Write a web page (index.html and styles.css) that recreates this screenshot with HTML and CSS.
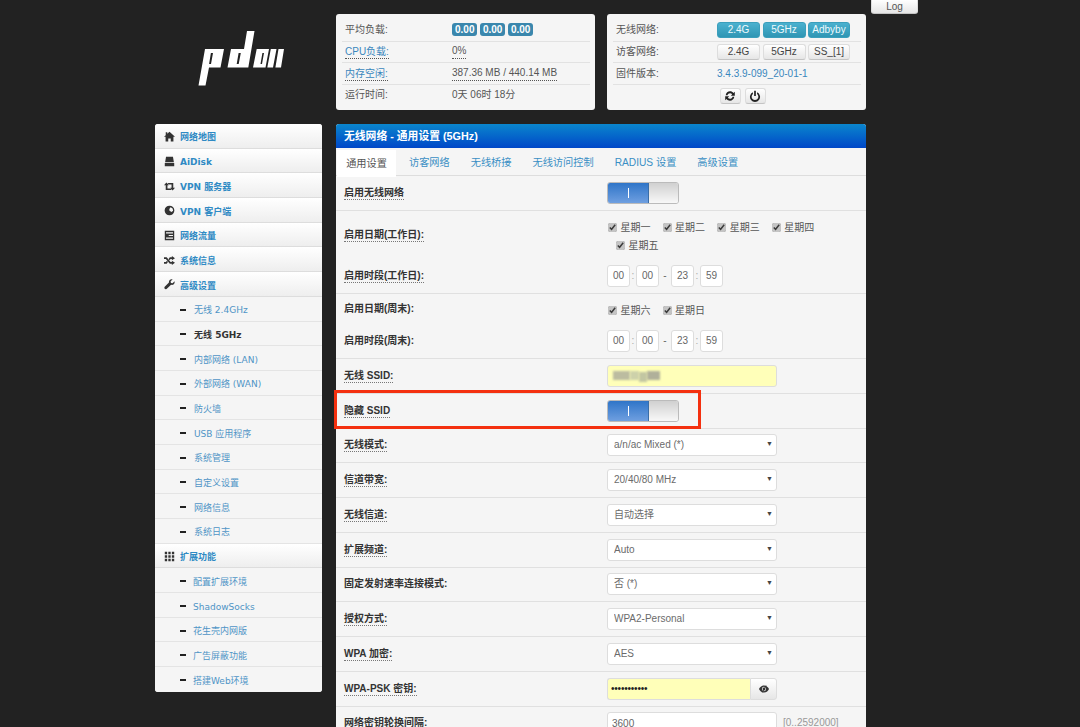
FILE: index.html
```html
<!DOCTYPE html>
<html lang="zh">
<head>
<meta charset="utf-8">
<title>无线网络 - 通用设置 (5GHz)</title>
<link rel="stylesheet" href="styles.css">
</head>
<body>
<svg class="defs" width="0" height="0" aria-hidden="true">
  <symbol id="i-home" viewBox="0 0 14 14"><path d="M7 .8 L14 7.4 H12 V13.5 H8.6 V9.5 H5.4 V13.5 H2 V7.4 H0 L2.2 5.3 V1.6 H4.2 V3.4 Z"/></symbol>
  <symbol id="i-hdd" viewBox="0 0 14 14"><path d="M2.6 1 H11.4 L12.6 8 H1.4 Z M1 9 H13 V13 H1 Z"/></symbol>
  <symbol id="i-retweet" viewBox="0 0 14 14"><path d="M3 2 L6.2 5.4 H4.4 V9.4 H8.2 L9.8 11.4 H2.2 V5.4 H0 Z M4.4 2.6 H11.8 V8.6 H14 L11 12 L7.8 8.6 H9.6 V4.6 H6 Z"/></symbol>
  <symbol id="i-globe" viewBox="0 0 14 14"><path fill-rule="evenodd" d="M7 .8 A6.2 6.2 0 1 0 7 13.2 A6.2 6.2 0 1 0 7 .8 Z M8.4 3 L11 4.4 L11.6 7.2 L9.6 8.8 L8 8 L6.6 6.6 L7 4.8 Z"/></symbol>
  <symbol id="i-tasks" viewBox="0 0 14 14"><path fill-rule="evenodd" d="M1 1 H13 V13 H1 Z M2.6 3 V4.4 H11.4 V3 Z M6 6.3 V7.7 H11.4 V6.3 Z M2.6 9.6 V11 H11.4 V9.6 Z"/></symbol>
  <symbol id="i-random" viewBox="0 0 14 14"><path d="M0 3 H3.4 L8.4 9 H10 V7.2 L14 10 L10 12.8 V11 H7.4 L2.4 5 H0 Z M0 9 H2.4 L3.8 7.4 L5 8.9 L3.4 11 H0 Z M7.4 3 H10 V1.2 L14 4 L10 6.8 V5 H8.4 L7 6.6 L5.9 5.1 Z"/></symbol>
  <symbol id="i-wrench" viewBox="0 0 14 14"><path d="M13.4 3 L10.9 5.4 L8.8 5 L8.4 3 L10.9 .6 C8.4 -.2 5.8 1.8 6.3 4.6 L.9 10 C-.2 11.4 .9 13.4 2.6 13 C3 12.9 3.3 12.7 3.6 12.4 L9 7.4 C11.8 8.2 14.2 5.8 13.4 3 Z"/></symbol>
  <symbol id="i-th" viewBox="0 0 14 14"><path d="M1 1 H4 V4 H1 Z M5.5 1 H8.5 V4 H5.5 Z M10 1 H13 V4 H10 Z M1 5.5 H4 V8.5 H1 Z M5.5 5.5 H8.5 V8.5 H5.5 Z M10 5.5 H13 V8.5 H10 Z M1 10 H4 V13 H1 Z M5.5 10 H8.5 V13 H5.5 Z M10 10 H13 V13 H10 Z"/></symbol>
  <symbol id="i-minus" viewBox="0 0 6 2"><rect width="6" height="2"/></symbol>
</svg>

<div class="page">
  <header class="top">
    <div class="logo">
      <svg class="logo-mark" viewBox="0 0 100 65" role="img" aria-label="pdcn">
        <path fill-rule="evenodd" d="M15 24 H34 L30.5 42.5 H19 L15.5 60.5 H8.5 Z M20.9 28 L19.1 39 H21 L23 28 Z"/>
        <path fill-rule="evenodd" d="M57 6 H64.5 L58.3 42.5 H37.5 L41 24 H54 Z M48.6 28 L46.7 39 H48.7 L50.8 28 Z"/>
        <path fill-rule="evenodd" d="M66.7 24 H79 L75.5 42.5 H63 Z M72.4 28 L70.5 39 H72 L74 28 Z"/>
        <path d="M80.8 24 H86.5 L83 42.5 H77.3 Z M88.5 24 H94 L91 42.5 H85.4 Z"/>
      </svg>
    </div>
    <section class="panel">
      <div class="stat"><span class="stat-name">平均负载:</span><span class="stat-value"><span class="badge">0.00</span><span class="badge">0.00</span><span class="badge">0.00</span></span></div>
      <div class="stat"><span class="stat-name"><a class="tip-link">CPU负载:</a></span><span class="stat-value"><span class="tip">0%</span></span></div>
      <div class="stat"><span class="stat-name"><a class="tip-link">内存空闲:</a></span><span class="stat-value"><span class="tip">387.36 MB / 440.14 MB</span></span></div>
      <div class="stat"><span class="stat-name">运行时间:</span><span class="stat-value">0天 06时 18分</span></div>
    </section>
    <section class="panel panel-status">
      <div class="stat"><span class="stat-name">无线网络:</span><span class="stat-value"><button class="btn btn-info w43">2.4G</button><button class="btn btn-info w43">5GHz</button><button class="btn btn-info w42">Adbyby</button></span></div>
      <div class="stat"><span class="stat-name">访客网络:</span><span class="stat-value"><button class="btn w43">2.4G</button><button class="btn w43">5GHz</button><button class="btn w42">SS_[1]</button></span></div>
      <div class="stat"><span class="stat-name">固件版本:</span><span class="stat-value"><a class="fw-link">3.4.3.9-099_20-01-1</a></span></div>
      <div class="stat stat-tools">
        <button class="btn btn-icon" aria-label="刷新"><svg viewBox="0 0 14 14" class="tool-icon"><path d="M2 6.2 C2.4 3.4 4.5 1.6 7 1.6 C8.7 1.6 10.1 2.3 11 3.4 L12.6 2 V6.6 H8 L9.5 5 C8.9 4.2 8 3.7 7 3.7 C5.6 3.7 4.4 4.7 4.1 6.2 Z M12 7.8 C11.6 10.6 9.5 12.4 7 12.4 C5.3 12.4 3.9 11.7 3 10.6 L1.4 12 V7.4 H6 L4.5 9 C5.1 9.8 6 10.3 7 10.3 C8.4 10.3 9.6 9.3 9.9 7.8 Z"/></svg></button>
        <button class="btn btn-icon" aria-label="电源"><svg viewBox="0 0 14 14" class="tool-icon"><path d="M6 1 H8 V7 H6 Z M4.6 2.6 V4.8 A3.9 3.9 0 1 0 9.4 4.8 V2.6 A5.9 5.9 0 1 1 4.6 2.6 Z"/></svg></button>
      </div>
    </section>
    <button class="btn btn-log">Log</button>
  </header>

  <div class="layout">
    <nav class="sidebar">
      <a class="nav-main"><svg class="nav-icon"><use href="#i-home"/></svg>网络地图</a>
      <a class="nav-main"><svg class="nav-icon"><use href="#i-hdd"/></svg>AiDisk</a>
      <a class="nav-main"><svg class="nav-icon"><use href="#i-retweet"/></svg>VPN 服务器</a>
      <a class="nav-main"><svg class="nav-icon"><use href="#i-globe"/></svg>VPN 客户端</a>
      <a class="nav-main"><svg class="nav-icon"><use href="#i-tasks"/></svg>网络流量</a>
      <a class="nav-main"><svg class="nav-icon"><use href="#i-random"/></svg>系统信息</a>
      <a class="nav-main"><svg class="nav-icon"><use href="#i-wrench"/></svg>高级设置</a>
      <a class="nav-sub"><svg class="nav-dash"><use href="#i-minus"/></svg>无线 2.4GHz</a>
      <a class="nav-sub is-active"><svg class="nav-dash"><use href="#i-minus"/></svg>无线 5GHz</a>
      <a class="nav-sub"><svg class="nav-dash"><use href="#i-minus"/></svg>内部网络 (LAN)</a>
      <a class="nav-sub"><svg class="nav-dash"><use href="#i-minus"/></svg>外部网络 (WAN)</a>
      <a class="nav-sub"><svg class="nav-dash"><use href="#i-minus"/></svg>防火墙</a>
      <a class="nav-sub"><svg class="nav-dash"><use href="#i-minus"/></svg>USB 应用程序</a>
      <a class="nav-sub"><svg class="nav-dash"><use href="#i-minus"/></svg>系统管理</a>
      <a class="nav-sub"><svg class="nav-dash"><use href="#i-minus"/></svg>自定义设置</a>
      <a class="nav-sub"><svg class="nav-dash"><use href="#i-minus"/></svg>网络信息</a>
      <a class="nav-sub"><svg class="nav-dash"><use href="#i-minus"/></svg>系统日志</a>
      <a class="nav-main"><svg class="nav-icon"><use href="#i-th"/></svg>扩展功能</a>
      <a class="nav-sub nav-ext"><svg class="nav-dash"><use href="#i-minus"/></svg>配置扩展环境</a>
      <a class="nav-sub nav-ext"><svg class="nav-dash"><use href="#i-minus"/></svg>ShadowSocks</a>
      <a class="nav-sub nav-ext"><svg class="nav-dash"><use href="#i-minus"/></svg>花生壳内网版</a>
      <a class="nav-sub nav-ext"><svg class="nav-dash"><use href="#i-minus"/></svg>广告屏蔽功能</a>
      <a class="nav-sub nav-ext"><svg class="nav-dash"><use href="#i-minus"/></svg>搭建Web环境</a>
    </nav>

    <main class="content">
      <h1 class="content-title">无线网络 - 通用设置 (5GHz)</h1>
      <div class="tabs">
        <a class="tab is-active">通用设置</a>
        <a class="tab">访客网络</a>
        <a class="tab">无线桥接</a>
        <a class="tab">无线访问控制</a>
        <a class="tab">RADIUS 设置</a>
        <a class="tab">高级设置</a>
      </div>

      <div class="row"><span class="label"><span class="tip-label">启用无线网络</span></span><div class="toggle"><span class="toggle-on"><i class="toggle-bar"></i></span><span class="toggle-off"></span></div></div>

      <div class="row row-group">
        <div class="sub sub-days"><span class="label label-mid"><span class="tip-label">启用日期(工作日):</span></span>
          <div class="days">
            <div class="days-line">
              <label class="day"><input type="checkbox" checked>星期一</label>
              <label class="day"><input type="checkbox" checked>星期二</label>
              <label class="day"><input type="checkbox" checked>星期三</label>
              <label class="day"><input type="checkbox" checked>星期四</label>
            </div>
            <div class="days-line days-wrap">
              <label class="day"><input type="checkbox" checked>星期五</label>
            </div>
          </div>
        </div>
        <div class="sub sub-time"><span class="label"><span class="tip-label">启用时段(工作日):</span></span>
          <div class="times"><input class="time" value="00"><span class="sep">:</span><input class="time" value="00"><span class="sep sep-dash">-</span><input class="time" value="23"><span class="sep">:</span><input class="time" value="59"></div>
        </div>
      </div>

      <div class="row row-group">
        <div class="sub sub-weekend"><span class="label">启用日期(周末):</span>
          <div class="days-line">
            <label class="day"><input type="checkbox" checked>星期六</label>
            <label class="day"><input type="checkbox" checked>星期日</label>
          </div>
        </div>
        <div class="sub sub-weekend-time"><span class="label">启用时段(周末):</span>
          <div class="times"><input class="time" value="00"><span class="sep">:</span><input class="time" value="00"><span class="sep sep-dash">-</span><input class="time" value="23"><span class="sep">:</span><input class="time" value="59"></div>
        </div>
      </div>

      <div class="row"><span class="label"><span class="tip-label">无线 SSID:</span></span><div class="field field-ssid"><span class="mask"></span><span class="mask mask-light"></span><span class="mask mask-low"></span><span class="mask mask-end"></span></div></div>
      <div class="row"><span class="label"><span class="tip-label">隐藏 SSID</span></span><div class="toggle"><span class="toggle-on"><i class="toggle-bar"></i></span><span class="toggle-off"></span></div></div>
      <div class="row"><span class="label"><span class="tip-label">无线模式:</span></span><div class="select-wrap"><select class="select"><option>a/n/ac Mixed (*)</option></select></div></div>
      <div class="row"><span class="label"><span class="tip-label">信道带宽:</span></span><div class="select-wrap"><select class="select"><option>20/40/80 MHz</option></select></div></div>
      <div class="row"><span class="label"><span class="tip-label">无线信道:</span></span><div class="select-wrap"><select class="select"><option>自动选择</option></select></div></div>
      <div class="row"><span class="label"><span class="tip-label">扩展频道:</span></span><div class="select-wrap"><select class="select"><option>Auto</option></select></div></div>
      <div class="row"><span class="label">固定发射速率连接模式:</span><div class="select-wrap"><select class="select"><option>否 (*)</option></select></div></div>
      <div class="row"><span class="label"><span class="tip-label">授权方式:</span></span><div class="select-wrap"><select class="select"><option>WPA2-Personal</option></select></div></div>
      <div class="row"><span class="label"><span class="tip-label">WPA 加密:</span></span><div class="select-wrap"><select class="select"><option>AES</option></select></div></div>
      <div class="row"><span class="label"><span class="tip-label">WPA-PSK 密钥:</span></span>
        <div class="pass"><input class="pass-input" type="password" value="12345678901"><button class="pass-eye" aria-label="显示"><svg viewBox="0 0 14 10" class="eye-icon"><path fill-rule="evenodd" d="M7 0 C10.4 0 13 2.6 14 5 C13 7.4 10.4 10 7 10 C3.6 10 1 7.4 0 5 C1 2.6 3.6 0 7 0 Z M7 2 A3 3 0 1 0 7 8 A3 3 0 1 0 7 2 Z"/><circle cx="7" cy="5" r="2"/><path d="M9.6 0 L10.8 .6 L5 10 L3.8 9.4 Z"/></svg></button></div>
      </div>
      <div class="row"><span class="label"><span class="tip-label">网络密钥轮换间隔:</span></span><input class="field-plain" value="3600"><span class="hint">[0..2592000]</span></div>
      <div class="row"></div>

      <div class="callout"></div>
    </main>
  </div>
</div>
</body>
</html>
```
FILE: styles.css
```css
* { box-sizing: border-box; }
html, body { margin: 0; height: 727px; overflow: hidden; background: #222; }
body { font: 10px/1.2 "Liberation Sans", "Noto Sans CJK SC", sans-serif; color: #444; }
.defs { display: block; height: 0; }
a { color: #2f8ac4; text-decoration: none; }
button, input, select { font: inherit; margin: 0; }

.page { width: 1080px; padding-left: 155px; }

/* top */
.top { display: flex; align-items: flex-start; height: 124px; }
.logo { width: 181px; height: 124px; padding: 25px 0 0 35px; }
.logo-mark { display: block; width: 100px; height: 65px; fill: #fff; }
.panel { width: 259px; height: 96px; margin-top: 14px; padding: 5px 5px 0 6px; background: #f5f5f5; border-radius: 3px; }
.panel-status { margin-left: 12px; }
.stat { display: flex; align-items: center; height: 21.7px; padding-left: 3px; border-top: 1px solid #e2e2e2; }
.stat:first-child { border-top: 0; }
.stat-name { width: 107px; color: #555; flex: none; }
.panel-status .stat-name { width: 101px; }
.stat-value { display: flex; gap: 2.5px; color: #555; }
.stat a { color: #3a87bd; }
.tip, .tip-link { border-bottom: 1px dotted #555; padding-bottom: 1px; }
.tip-link { color: #3a87bd; }
.badge { padding: 1.5px 3px; height: 13px; line-height: 10px; font-weight: 700; color: #fff; background: #3a87ad; border-radius: 3px; }
.btn { height: 16px; padding: 0; font-size: 10px; line-height: 14px; color: #444; background: linear-gradient(#fff, #e6e6e6); border: 1px solid #ddd; border-bottom-color: #c4c4c4; border-radius: 3px; }
.btn-info { color: #eef9fc; background: linear-gradient(#4bb1cf, #2f96b4); border-color: #3b9fbc; }
.w43 { width: 43px; }
.w42 { width: 42px; }
.stat-tools { justify-content: center; gap: 4px; padding: 2px 0 0 11px; }
.btn-icon { width: 21px; display: flex; align-items: center; justify-content: center; }
.tool-icon { width: 12px; height: 12px; fill: #222; }
.btn-log { width: 47px; height: 14px; margin-left: 5px; border-top: 0; border-radius: 0 0 3px 3px; color: #555; line-height: 13px; }

/* layout */
.layout { display: flex; gap: 14px; align-items: flex-start; }

/* sidebar */
.sidebar { width: 167px; display: grid; grid-auto-rows: 24.7px; background: #f5f5f5; border-radius: 3px; overflow: hidden; }
.nav-main { display: flex; align-items: center; padding: 4px 0 0 9px; font-family: "DejaVu Sans", "Noto Sans CJK SC", sans-serif; font-size: 9px; font-weight: 700; color: #2f8ac4; background: linear-gradient(#fff, #eee); border-bottom: 1px solid #ddd; }
.nav-icon { width: 11px; height: 11px; margin: -2px 5px 0 0; fill: #333; flex: none; }
.nav-sub { display: flex; align-items: center; padding: 4px 0 0 25px; font-family: "DejaVu Sans", "Noto Sans CJK SC", sans-serif; font-size: 9px; color: #4f94c6; background: #f5f5f5; border-bottom: 1px solid #e4e4e4; }
.nav-sub:last-child { border-bottom: 0; }
.nav-dash { width: 6px; height: 2px; margin: -2px 8px 0 0; fill: #222; flex: none; }
.nav-ext .nav-dash { margin-right: 7px; }
.is-active.nav-sub { font-weight: 700; color: #333; }

/* content */
.content { position: relative; width: 530px; background: #f5f5f5; border-radius: 3px 3px 0 0; }
.content-title { margin: 0; height: 24px; padding: 0 0 0 8px; font-size: 10.8px; line-height: 24px; font-weight: 700; color: #fff; background: linear-gradient(#0a86cd, #0047c8); border-radius: 3px 3px 0 0; }
.tabs { display: flex; height: 28px; padding: 2px 0 0 1px; font-size: 10.2px; border-bottom: 1px solid #ddd; }
.tab { display: flex; align-items: center; padding: 2px 0 0; margin-right: 21px; color: #3a8fc4; }
.tab.is-active { width: 59px; height: 27px; margin-right: 13px; justify-content: center; color: #555; background: #fff; }

.row { display: flex; align-items: center; height: 34.75px; padding-left: 8px; border-bottom: 1px solid #e0e0e0; }
.row-group { display: block; height: auto; padding: 0; }
.label { width: 263px; flex: none; font-size: 10px; font-weight: 700; color: #333; }
.tip-label { border-bottom: 1px dotted #777; padding-bottom: 1px; }
.sub { display: flex; align-items: center; padding-left: 8px; }
.sub-days { height: 49px; }
.sub-days > .label { margin-bottom: 1px; }
.sub-time { height: 33px; padding-bottom: 1px; }
.sub-weekend { height: 31px; padding-top: 3px; }
.sub-weekend > .label { margin-bottom: 3px; }
.sub-weekend-time { height: 33.25px; padding-bottom: 1px; }
.days { display: flex; flex-direction: column; gap: 6px; padding-top: 3px; }
.days-line { display: flex; }
.days-wrap { padding-left: 8px; }
.day { display: flex; align-items: center; width: 54.6px; color: #555; }
.day input { width: 9px; height: 9px; margin: 0 3.5px 0 1px; accent-color: #c4c4c4; }

.times { display: flex; align-items: center; }
.time { width: 23px; height: 22px; padding: 0; text-align: center; color: #666; background: #fff; border: 1px solid #ddd; border-radius: 3px; }
.sep { width: 6px; text-align: center; color: #aaa; }
.sep-dash { width: 12px; color: #666; }

.toggle { display: flex; width: 72px; height: 22px; border-radius: 3px; overflow: hidden; border: 1px solid #bbb; }
.toggle-on { display: flex; align-items: center; justify-content: center; width: 41px; background: linear-gradient(#2f75c8, #6f9fe0); border-right: 1px solid #3a6ea8; }
.toggle-bar { display: block; width: 1px; height: 10px; background: #fff; }
.toggle-off { flex: 1; background: linear-gradient(#d0d0d0, #f8f8f8); }

.field-ssid { display: flex; align-items: center; width: 170px; height: 22px; padding-left: 5px; background: #ffffb9; border: 1px solid #ddd; border-radius: 3px; }
.mask { display: block; width: 17px; height: 9px; background: #bcbca0; filter: blur(1px); }
.mask-light { width: 9px; background: #cdd1aa; }
.mask-low { width: 8px; height: 10px; margin-top: 3px; background: #c2c6a2; }
.mask-end { width: 13px; background: #b0b09a; }

.select-wrap { position: relative; width: 170px; height: 22px; }
.select-wrap::after { content: "▼"; position: absolute; top: 6px; right: 4px; font-size: 7px; color: #444; pointer-events: none; }
.select { width: 100%; height: 100%; padding: 0 0 0 6px; appearance: none; font-size: 10px; color: #6b6b6b; background: #fff; border: 1px solid #ddd; border-radius: 3px; }

.pass { display: flex; width: 170px; height: 22px; }
.pass-input { width: 143px; height: 100%; padding: 0 3px; color: #222; background: #ffffb9; border: 1px solid #ddd; border-right: 0; border-radius: 3px 0 0 3px; font-size: 10px; letter-spacing: -.2px; }
.pass-eye { flex: 1; display: flex; align-items: center; justify-content: center; padding: 0; background: linear-gradient(#fff, #e6e6e6); border: 1px solid #ddd; border-radius: 0 3px 3px 0; }
.eye-icon { width: 10px; height: 8px; fill: #333; }

.field-plain { width: 170px; height: 22px; padding: 0 4px; color: #666; background: #fff; border: 1px solid #ddd; border-radius: 3px; }
.hint { margin-left: 6px; color: #999; }

.callout { position: absolute; left: -2px; top: 266px; width: 367px; height: 39px; border: 3px solid #f4300f; pointer-events: none; }
```
